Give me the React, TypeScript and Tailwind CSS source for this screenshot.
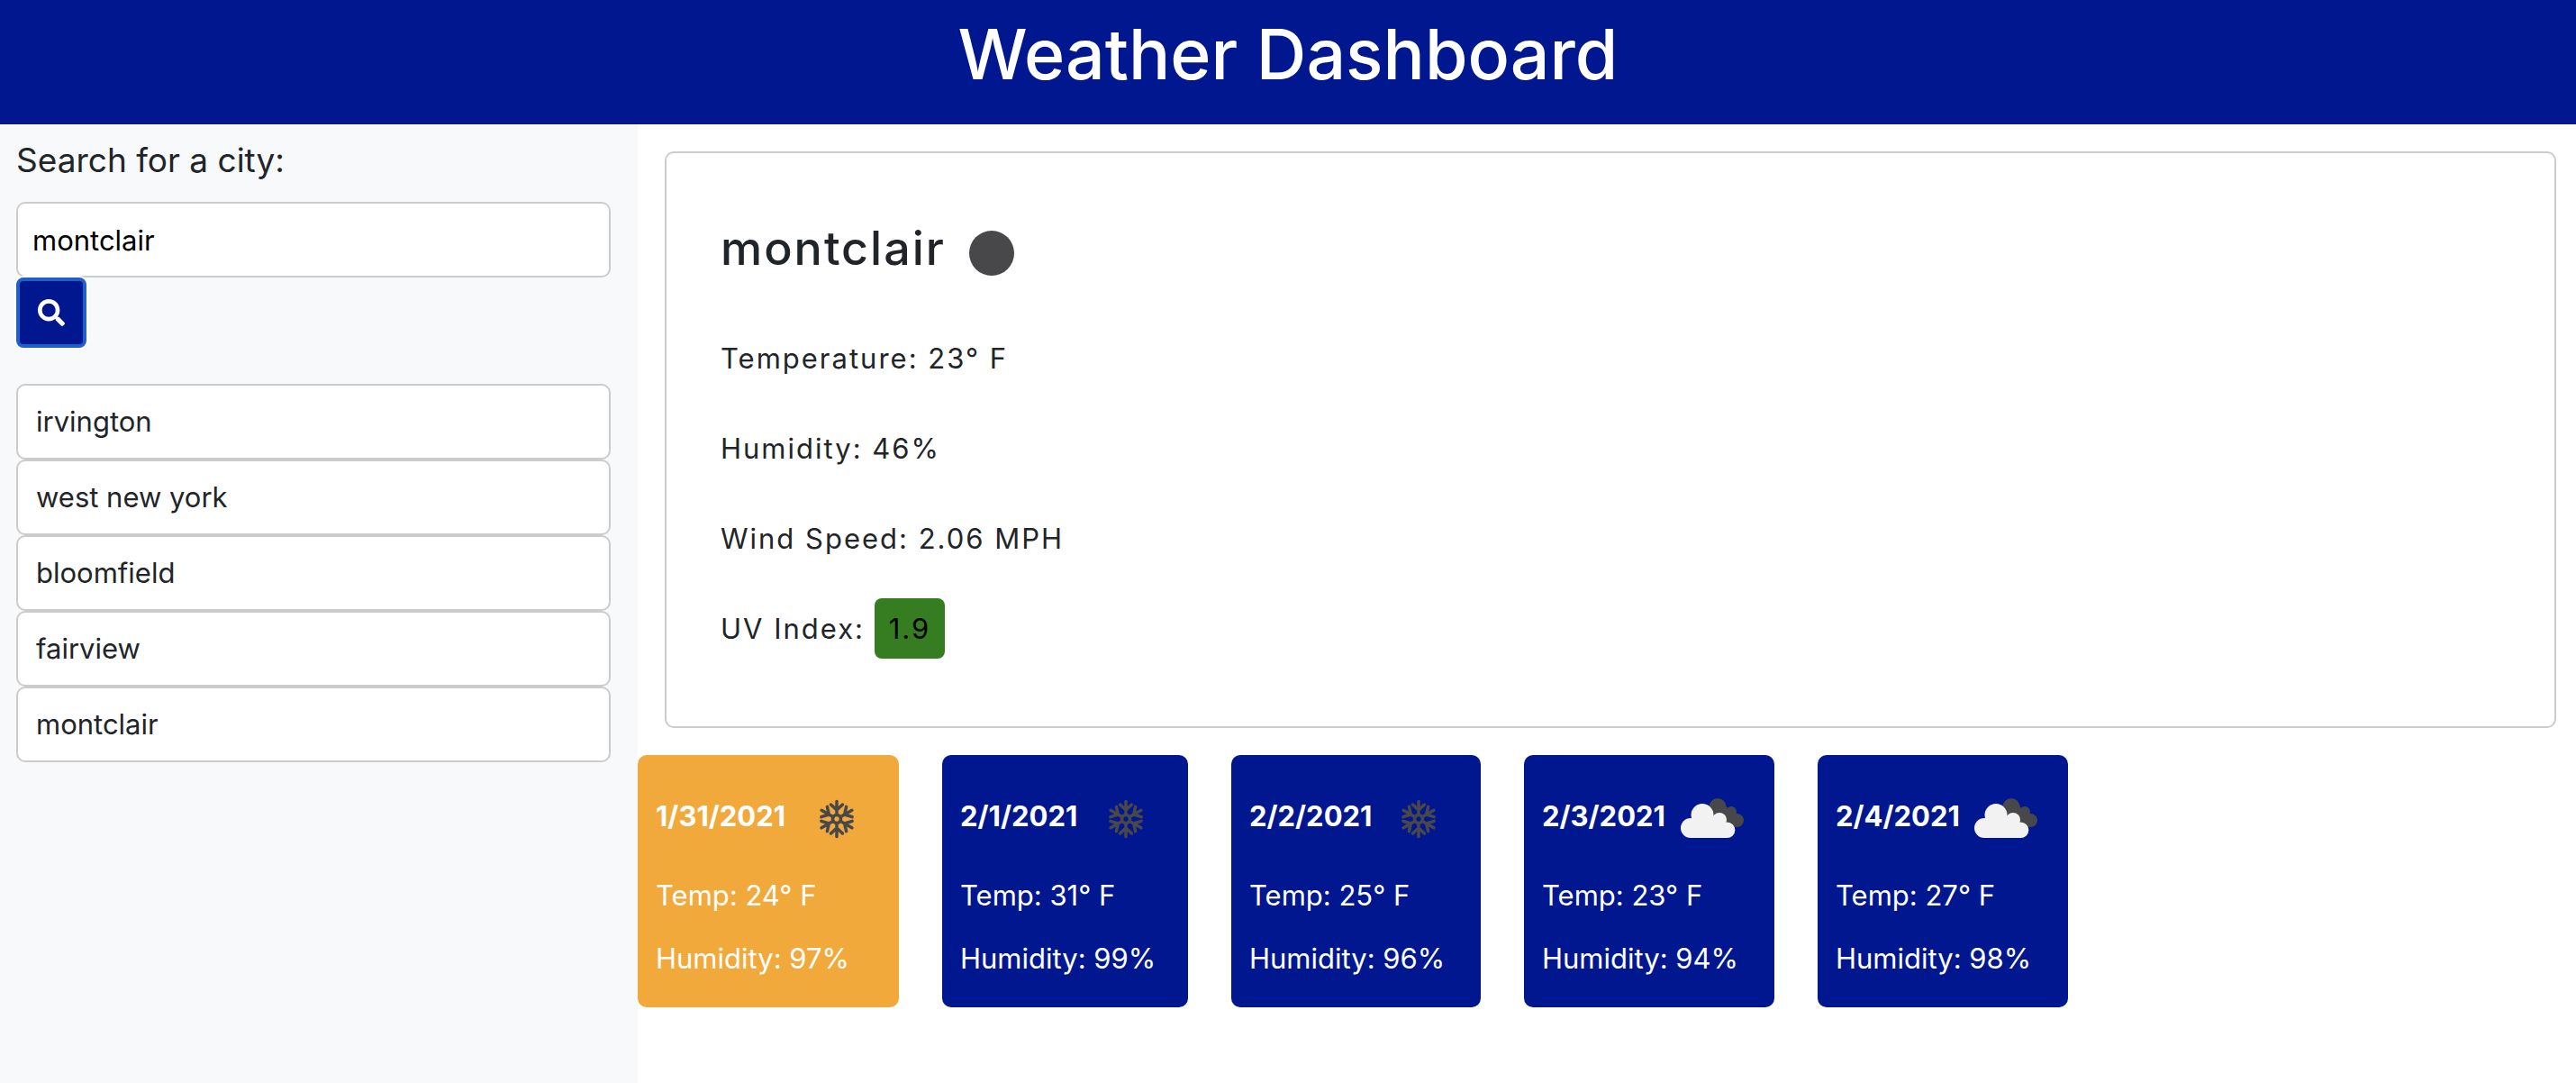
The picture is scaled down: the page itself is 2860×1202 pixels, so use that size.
import { FaSearch } from "react-icons/fa";

type Sky = "snow" | "clouds";

const cities = ["irvington", "west new york", "bloomfield", "fairview", "montclair"];

const forecast: { date: string; sky: Sky; temp: number; humidity: number; today?: boolean }[] = [
  { date: "1/31/2021", sky: "snow", temp: 24, humidity: 97, today: true },
  { date: "2/1/2021", sky: "snow", temp: 31, humidity: 99 },
  { date: "2/2/2021", sky: "snow", temp: 25, humidity: 96 },
  { date: "2/3/2021", sky: "clouds", temp: 23, humidity: 94 },
  { date: "2/4/2021", sky: "clouds", temp: 27, humidity: 98 },
];

function Snowflake() {
  return (
    <svg viewBox="0 0 100 100" className="size-[100px] shrink-0" role="img" aria-label="Snow">
      <g stroke="#48484a" strokeWidth="3.5" strokeLinecap="round" fill="none">
        <circle cx="51" cy="53" r="4.500" />
        {[0, 60, 120, 180, 240, 300].map((angle) => (
          <path key={angle} transform={`rotate(${angle} 51 53)`} d="M51 48.500V33.500M51 43L44.500 37M51 43L57.500 37" />
        ))}
      </g>
    </svg>
  );
}

function Clouds() {
  return (
    <svg viewBox="0 0 100 100" className="size-[100px] shrink-0" role="img" aria-label="Broken clouds">
      <g fill="#48484a">
        <circle cx="57" cy="39.500" r="9.500" />
        <circle cx="72" cy="45" r="6" />
        <circle cx="78.500" cy="54.500" r="7.500" />
        <path d="M50 42L64 36L72 46L80 60L74 61L60 56Z" />
      </g>
      <g fill="#f2f2f2">
        <circle cx="40" cy="48.500" r="12.500" />
        <circle cx="59" cy="54" r="8" />
        <circle cx="67.500" cy="65.200" r="8.800" />
        <circle cx="27" cy="63" r="11" />
        <path d="M27 74H67.500V58L50 48L29 53Z" />
      </g>
    </svg>
  );
}

export default function App() {
  return (
    <div className="flex min-h-screen flex-col bg-white font-['Inter',sans-serif] text-[31px] leading-[48px] text-[#212529]">
      <header className="bg-[#00178f] pt-3 pb-[30px] text-center">
        <h1 className="text-[77px] leading-[96px] font-medium text-white">Weather Dashboard</h1>
      </header>

      <div className="flex flex-1">
        <aside className="w-[708px] shrink-0 bg-[#f8f9fb] px-[18px] pt-4 pr-[30px]">
          <form onSubmit={(e) => e.preventDefault()}>
            <label htmlFor="city" className="mb-[22px] block text-[37px] leading-[48px]">
              Search for a city:
            </label>
            <input
              id="city"
              type="text"
              defaultValue="montclair"
              className="block h-[84px] w-full rounded-[10px] border-2 border-[#cccccc] bg-white px-4 text-[31px] text-black outline-none"
            />
            <button
              type="submit"
              aria-label="Search"
              className="flex size-[78px] items-center justify-center rounded-lg border-4 border-[#1f5fc8] bg-[#00178f] text-white ring-2 ring-white"
            >
              <FaSearch className="size-[30px]" />
            </button>
          </form>
          <ul className="mt-10">
            {cities.map((city) => (
              <li key={city} className="rounded-[10px] border-2 border-[#cccccc] bg-white px-5 py-4">
                {city}
              </li>
            ))}
          </ul>
        </aside>

        <main className="min-w-0 flex-1">
          <section className="mt-[30px] mr-[22px] ml-[30px] rounded-[10px] border-2 border-[#cccccc] px-[60px] pt-12 pb-[58px] tracking-[2px]">
            <div className="flex items-center">
              <h2 className="text-[52px] leading-[116px] font-medium">montclair</h2>
              <svg viewBox="0 0 100 100" className="size-[100px]" role="img" aria-label="Clear night">
                <circle cx="51" cy="55" r="25" fill="#48484a" />
              </svg>
            </div>
            <p className="mt-[14px] leading-[100px]">Temperature: 23° F</p>
            <p className="leading-[100px]">Humidity: 46%</p>
            <p className="leading-[100px]">Wind Speed: 2.06 MPH</p>
            <p className="leading-[100px]">
              UV Index: <span className="rounded-lg bg-[#367d22] px-4 py-[15px] text-black">1.9</span>
            </p>
          </section>

          <section className="mt-[30px] grid grid-cols-[290px_273px_277px_278px_278px] gap-12 text-white">
            {forecast.map((day) => (
              <article
                key={day.date}
                className={
                  day.today
                    ? "rounded-[10px] bg-[#f2a93b] px-5 pt-[18px] pb-[30px]"
                    : "rounded-[10px] bg-[#00178f] px-5 pt-[18px] pb-[30px]"
                }
              >
                <div className="flex items-center justify-between">
                  <h3 className="font-bold">{day.date}</h3>
                  {day.sky === "snow" ? <Snowflake /> : <Clouds />}
                </div>
                <p className="mt-[14px]">Temp: {day.temp}° F</p>
                <p className="mt-[22px]">Humidity: {day.humidity}%</p>
              </article>
            ))}
          </section>
        </main>
      </div>
    </div>
  );
}
